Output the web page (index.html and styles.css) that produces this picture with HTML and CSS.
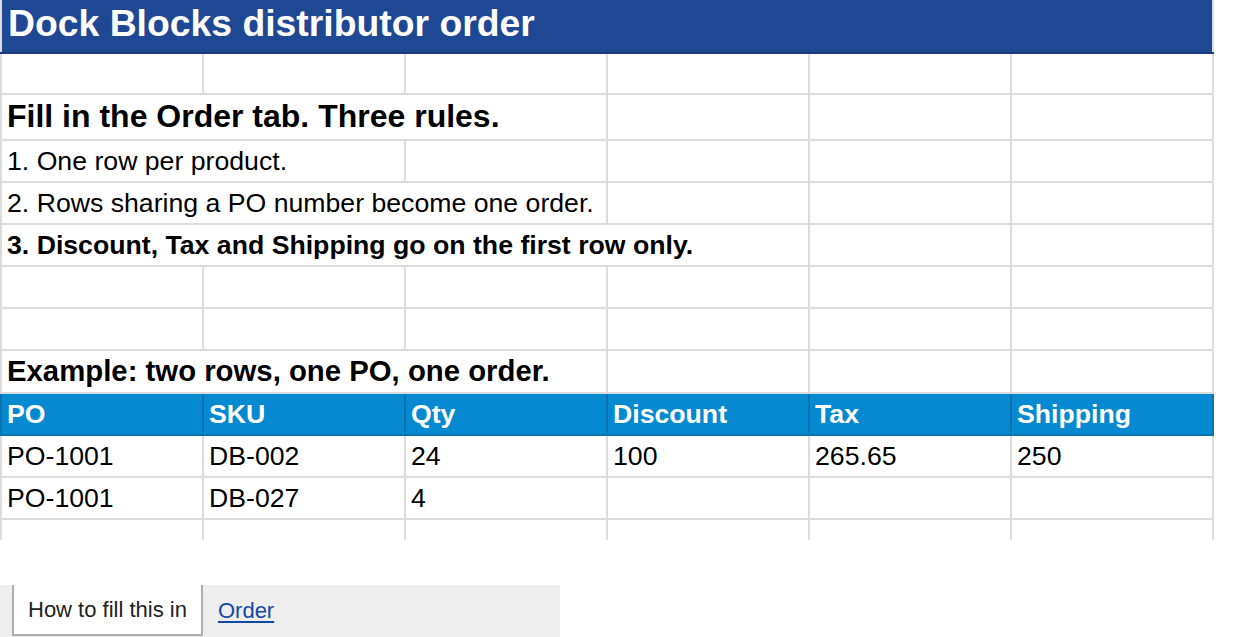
FILE: index.html
```html
<!DOCTYPE html>
<html lang="en">
<head>
  <meta charset="UTF-8">
  <meta name="viewport" content="width=device-width, initial-scale=1.0">
  <title>Dock Blocks distributor order</title>
  <link rel="stylesheet" href="styles.css">
</head>
<body>

  <div class="sheet">
    <table class="grid">
      <colgroup>
        <col><col><col><col><col><col>
      </colgroup>
      <tr class="row-title">
        <td colspan="6" class="title">Dock Blocks distributor order</td>
      </tr>
      <tr class="row-short">
        <td></td><td></td><td></td><td></td><td></td><td></td>
      </tr>
      <tr class="row-tall">
        <td colspan="3" class="heading">Fill in the Order tab. Three rules.</td>
        <td></td><td></td><td></td>
      </tr>
      <tr>
        <td colspan="2">1. One row per product.</td>
        <td></td><td></td><td></td><td></td>
      </tr>
      <tr>
        <td colspan="3">2. Rows sharing a PO number become one order.</td>
        <td></td><td></td><td></td>
      </tr>
      <tr>
        <td colspan="4" class="bold">3. Discount, Tax and Shipping go on the first row only.</td>
        <td></td><td></td>
      </tr>
      <tr>
        <td></td><td></td><td></td><td></td><td></td><td></td>
      </tr>
      <tr>
        <td></td><td></td><td></td><td></td><td></td><td></td>
      </tr>
      <tr class="row-example">
        <td colspan="3" class="subheading">Example: two rows, one PO, one order.</td>
        <td></td><td></td><td></td>
      </tr>
      <tr class="head">
        <td>PO</td><td>SKU</td><td>Qty</td><td>Discount</td><td>Tax</td><td>Shipping</td>
      </tr>
      <tr>
        <td>PO-1001</td><td>DB-002</td><td>24</td><td>100</td><td>265.65</td><td>250</td>
      </tr>
      <tr>
        <td>PO-1001</td><td>DB-027</td><td>4</td><td></td><td></td><td></td>
      </tr>
      <tr>
        <td></td><td></td><td></td><td></td><td></td><td></td>
      </tr>
    </table>
  </div>

  <div class="tabs">
    <div class="tab active">How to fill this in</div>
    <a class="tab" href="#order">Order</a>
  </div>

</body>
</html>
```

FILE: styles.css
```css
body {
  margin: 0;
  background: #fff;
  font-family: Arial, "Liberation Sans", Helvetica, sans-serif;
  color: #000;
}
.sheet {
  height: 540px;
  overflow: hidden;
}
.grid {
  border-collapse: collapse;
  table-layout: fixed;
  width: 1214px;
  margin-left: 0;
}
.grid col {
  width: 202px;
}
.grid tr {
  height: 42px;
}
.grid td {
  border: 2px solid #dcdcdc;
  padding: 0 5px 4px;
  vertical-align: bottom;
  font-size: 26.67px;
  line-height: 1.15;
  white-space: nowrap;
  overflow: visible;
}
.grid .row-title {
  height: 53px;
}
.grid .row-short {
  height: 41px;
}
.grid .row-tall {
  height: 46px;
}
.grid .row-example {
  height: 43px;
}
.title {
  background-color: #1e4794;
  color: #fff;
  font-weight: bold;
  font-size: 37.33px !important;
  border-top: none !important;
  border-bottom: 2px solid #1a3c80 !important;
  padding-left: 6px !important;
  padding-bottom: 7px !important;
}
.heading {
  font-weight: bold;
  font-size: 32px !important;
}
.subheading {
  font-weight: bold;
  font-size: 29.33px !important;
}
.bold {
  font-weight: bold;
}
.head td {
  background-color: #0589d0;
  color: #fff;
  font-weight: bold;
  border-color: #0a72ae;
  border-top-color: #dcdcdc;
}
.tabs {
  margin-top: 45px;
  width: 548px;
  height: 52px;
  padding-left: 12px;
  background: #eeeeee;
  display: flex;
  align-items: flex-start;
}
.tab {
  font-size: 22px;
  line-height: 49px;
  padding: 0 15px;
  color: #1149a5;
}
.tab.active {
  background: #fff;
  color: #222;
  padding: 0 14px;
  border: 2px solid #adadad;
  border-top: none;
}
a.tab {
  text-decoration: underline;
  text-underline-offset: 3px;
  line-height: 52px;
}
```
